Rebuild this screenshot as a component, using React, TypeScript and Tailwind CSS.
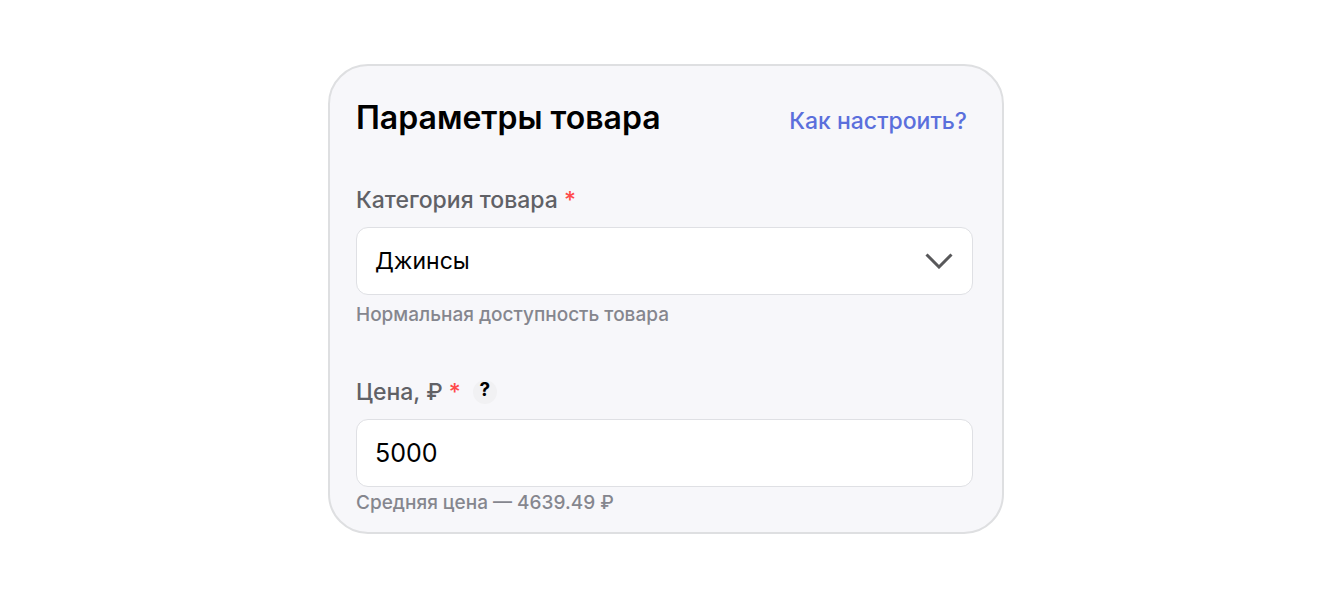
import React from "react";

const labelClass = "text-[23px] leading-8 font-medium text-[#606166]";
const hintClass = "text-[19px] leading-6 font-medium text-[#85868e]";
const fieldClass =
  "block h-17 w-full appearance-none rounded-xl border border-[#dfe0e4] bg-white px-[18px] text-black outline-none";

function Required() {
  return <span className="text-[#ff4a4a]">*</span>;
}

export default function App() {
  return (
    <main className="flex min-h-screen items-center justify-center bg-white py-16 pr-7 pl-4 font-['Inter','Noto_Sans',sans-serif]">
      <form className="w-full max-w-[676px] rounded-[40px] border-2 border-[#dedfe1] bg-[#f7f7fa] pt-8 pr-[29px] pb-[17px] pl-[26px]">
        <div className="flex items-baseline justify-between pr-1.5">
          <h1 className="text-[32px] leading-10 font-semibold text-black">Параметры товара</h1>
          <a href="#" className="text-[23px] leading-8 font-medium text-[#5b6fdc]">
            Как настроить?
          </a>
        </div>

        <div className="mt-[46px]">
          <label htmlFor="category" className={`${labelClass} block`}>
            Категория товара <Required />
          </label>
          <div className="relative mt-[11px]">
            <select id="category" className={`${fieldClass} text-[23px]`}>
              <option>Джинсы</option>
            </select>
            <svg
              viewBox="0 0 28 16"
              className="pointer-events-none absolute top-[26px] right-5 h-4 w-7"
              fill="none"
              stroke="#58585a"
              strokeWidth="3"
            >
              <path d="M1.5 1.5 14 14 26.5 1.5" />
            </svg>
          </div>
          <p className={`${hintClass} mt-2`}>Нормальная доступность товара</p>
        </div>

        <div className="mt-[49px]">
          <div className="flex items-center gap-3">
            <label htmlFor="price" className={labelClass}>
              Цена, ₽ <Required />
            </label>
            <button type="button" className="flex size-6 justify-center rounded-full bg-[#f1f1f3] text-[19px] leading-5 font-bold text-black">
              ?
            </button>
          </div>
          <input
            id="price"
            type="text"
            inputMode="decimal"
            defaultValue="5000"
            className={`${fieldClass} mt-[11px] text-[25px]`}
          />
          <p className={`${hintClass} mt-1`}>Средняя цена — 4639.49 ₽</p>
        </div>
      </form>
    </main>
  );
}
